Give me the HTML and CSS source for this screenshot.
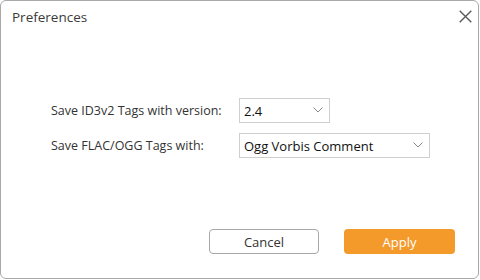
FILE: index.html
```html
<!DOCTYPE html>
<html>
<head>
<meta charset="utf-8">
<link rel="stylesheet" href="styles.css">
</head>
<body>
<div class="dialog">
  <div class="header">
    <span class="title">Preferences</span>
    <svg class="close" width="13" height="13" viewBox="0 0 13 13"><path d="M0.7 0.7L12.3 12.3M12.3 0.7L0.7 12.3" stroke="#5a5a5a" stroke-width="1.4" fill="none"/></svg>
  </div>
  <div class="form">
    <label class="label">Save ID3v2 Tags with version:</label>
    <div class="select short"><span>2.4</span><svg class="chev" width="10" height="6" viewBox="0 0 10 6"><path d="M0.5 0.5L5 5L9.5 0.5" stroke="#888" stroke-width="1" fill="none"/></svg></div>
    <label class="label">Save FLAC/OGG Tags with:</label>
    <div class="select long"><span>Ogg Vorbis Comment</span><svg class="chev" width="10" height="6" viewBox="0 0 10 6"><path d="M0.5 0.5L5 5L9.5 0.5" stroke="#888" stroke-width="1" fill="none"/></svg></div>
  </div>
  <div class="footer">
    <button class="btn cancel">Cancel</button>
    <button class="btn apply">Apply</button>
  </div>
</div>
</body>
</html>
```
FILE: styles.css
```css
html, body { margin: 0; padding: 0; background: #ffffff; }
body { font-family: "Open Sans", "Noto Sans", sans-serif; font-size: 12px; color: #333; }
.dialog {
  width: 479px; height: 279px; box-sizing: border-box;
  border: 1px solid #a8a8a8; border-radius: 6px; background: #fff;
  display: flex; flex-direction: column;
}
.header { display: flex; align-items: center; justify-content: space-between; height: 31px; padding: 0 6px 0 11px; }
.title { font-size: 13.5px; color: #3a3a3a; }
.close { margin-top: 0; }
.form {
  display: grid; grid-template-columns: 188px auto; row-gap: 10px;
  align-items: center; justify-items: start;
  margin: 66px 0 0 50px;
}
.label { font-size: 12.5px; color: #333; }
.select {
  box-sizing: border-box; height: 25px; border: 1px solid #cfcfcf;
  display: flex; align-items: center; justify-content: space-between;
  padding: 0 6px 0 4px; font-size: 13px; color: #111; background: #fff;
}
.select.short { width: 91px; }
.select.long { width: 191px; }
.chev { margin-bottom: 2px; }
.footer { margin-top: auto; display: flex; justify-content: flex-end; gap: 25px; padding: 0 23px 24px 0; }
.btn {
  box-sizing: border-box; width: 110px; height: 25px; border-radius: 4px;
  font-family: "Open Sans", "Noto Sans", sans-serif; font-size: 13px; cursor: pointer;
}
.cancel { background: #fff; border: 1px solid #a8a8a8; color: #333; }
.apply { background: #f39a2b; border: none; color: #fff; width: 111px; }
```
